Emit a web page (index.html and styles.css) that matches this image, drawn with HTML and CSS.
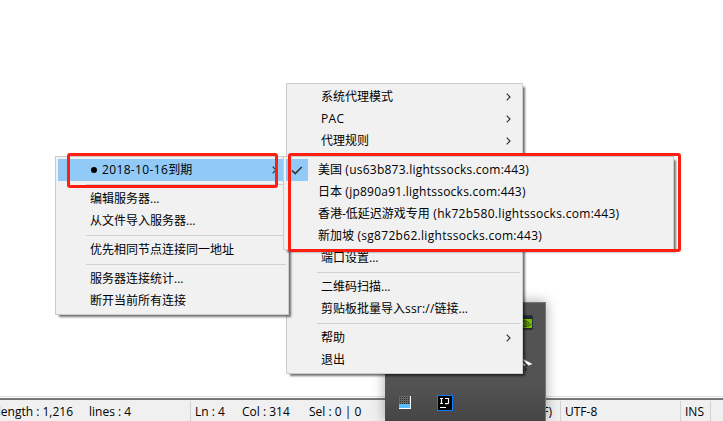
FILE: index.html
```html
<!DOCTYPE html>
<html lang="zh-CN">
<head>
<meta charset="utf-8">
<title>Menu</title>
<link rel="stylesheet" href="styles.css">
</head>
<body>
<div class="desktop">
  <main class="editor"></main>
  <footer class="status">
    <div class="cell doc"><span class="length">length : 1,216</span><span class="lines">lines : 4</span></div>
    <div class="cell pos"><span class="ln">Ln : 4</span><span class="col">Col : 314</span><span class="sel">Sel : 0 | 0</span></div>
    <div class="cell eol">Windows (CR LF)</div>
    <div class="cell enc">UTF-8</div>
    <div class="cell ins">INS</div>
    <div class="cell rest"></div>
  </footer>

  <section class="tray">
    <svg class="tray-icons" width="160" height="118" viewBox="0 0 160 118">
      <rect x="133.500" y="12.500" width="14" height="14" rx="1" fill="#22282c" stroke="#22313f"/>
      <rect x="134" y="16" width="13" height="9" fill="#76b900"/>
      <path d="M135 20q4-5 9 0q-4 5-9 0M137 20q3-3 5 0q-2 2-3 0M138 24q5 0 8-3" fill="none" stroke="#304c10"/>
      <path d="M134 54l4 2 9.500 5-4 1.500-3.500-2L136 59z" fill="#fff"/>
      <path d="M138 58.500l3 2.500-1 3-2-2z" fill="#e4e4e4"/>
      <path d="M137 57.500l5 4.500-2.500 2.500M141 65v3" fill="none" stroke="#222" stroke-width="1.200"/>
      <rect x="14" y="93" width="12" height="13" fill="#fff"/>
      <rect x="14" y="93" width="11" height="8" fill="#686868"/>
      <path d="M15 94.500h9M15 96.500h9M15 98.500h9M15 100.500h9" stroke="#2a2a2a" stroke-dasharray="1 1"/>
      <rect x="14" y="101" width="11" height="4" fill="#58bfff"/>
      <rect x="52.500" y="92.500" width="15" height="15" fill="#000" stroke="#087cff"/>
      <path d="M55 95.500h3M56.500 95.500v5M55 100.500h3M60 95.500h3.500v4.500q0 .7-1.500.7h-2M55 104.500h6" fill="none" stroke="#fff" stroke-width="1.200"/>
    </svg>
  </section>

  <nav class="menu main-menu">
    <div class="item"><span>系统代理模式</span><svg class="arrow" viewBox="0 0 5 8"><path d="M.7.7L4 4 .7 7.300"/></svg></div>
    <div class="item"><span class="pac">PAC</span><svg class="arrow" viewBox="0 0 5 8"><path d="M.7.7L4 4 .7 7.300"/></svg></div>
    <div class="item"><span>代理规则</span><svg class="arrow" viewBox="0 0 5 8"><path d="M.7.7L4 4 .7 7.300"/></svg></div>
    <div class="sep"></div>
    <div class="item"></div><div class="item"></div><div class="item"></div><div class="item"></div>
    <div class="item"><span>端口设置...</span></div>
    <div class="sep"></div>
    <div class="item"><span>二维码扫描...</span></div>
    <div class="item"><span>剪贴板批量导入<span class="ssr">ssr://</span>链接...</span></div>
    <div class="sep"></div>
    <div class="item"><span>帮助</span><svg class="arrow" viewBox="0 0 5 8"><path d="M.7.7L4 4 .7 7.300"/></svg></div>
    <div class="item"><span>退出</span></div>
  </nav>

  <nav class="menu server-menu">
    <div class="item active"><i class="dot"></i><span><span class="date">2018-10-16</span>到期</span><svg class="arrow" viewBox="0 0 5 8"><path d="M.7.7L4 4 .7 7.300"/></svg></div>
    <div class="sep"></div>
    <div class="item"><span>编辑服务器...</span></div>
    <div class="item"><span>从文件导入服务器...</span></div>
    <div class="sep"></div>
    <div class="item"><span>优先相同节点连接同一地址</span></div>
    <div class="sep"></div>
    <div class="item"><span>服务器连接统计...</span></div>
    <div class="item"><span>断开当前所有连接</span></div>
  </nav>

  <nav class="menu node-menu">
    <div class="item"><b class="check"><svg width="12" height="9" viewBox="0 0 12 9"><path d="M1 4.500L4.200 7.600 10.800 1"/></svg></b><span>美国<span class="host"> (us63b873.lightssocks.com:443)</span></span></div>
    <div class="item"><span>日本<span class="host"> (jp890a91.lightssocks.com:443)</span></span></div>
    <div class="item"><span>香港-低延迟游戏专用<span class="host wide"> (hk72b580.lightssocks.com:443)</span></span></div>
    <div class="item"><span>新加坡<span class="host wide"> (sg872b62.lightssocks.com:443)</span></span></div>
  </nav>

  <div class="mark mark-date"></div>
  <div class="mark mark-nodes"></div>
</div>
</body>
</html>
```
FILE: styles.css
```css
* { box-sizing: border-box; }
body { margin: 0; background: #fff; color: #000; font: 12px/22px "Open Sans", "Noto Sans CJK SC", sans-serif; overflow: hidden; }
.desktop { position: relative; width: 723px; height: 421px; display: flex; flex-direction: column; overflow: hidden; }
.editor { flex: 1; border-bottom: 1px solid #dedede; }
.status { height: 23px; margin-top: 1px; border-top: 2px solid #767676; background: #f0f0f0; display: flex; padding-top: 1px; white-space: nowrap; }
.cell { border-right: 1px solid #d2d2d2; overflow: hidden; display: flex; flex: none; }
.doc { width: 191px; }
.length { width: 89px; display: flex; justify-content: flex-end; padding-right: 16px; }
.pos { width: 250px; padding-left: 4px; }
.ln { width: 47px; }
.col { width: 67px; }
.eol { width: 120px; justify-content: flex-end; padding-right: 8px; }
.enc { width: 120px; padding-left: 4px; }
.ins { width: 30px; padding-left: 4px; }
.rest { flex: 1; border: 0; }

.tray { position: absolute; left: 385px; top: 302px; width: 161px; height: 119px; border-top: 1px solid #777; border-right: 1px solid #777; background: linear-gradient(#535353 70%, #454545); box-shadow: 0 0 12px rgba(0,0,0,.35); }
.tray-icons { display: block; }

.menu { position: absolute; padding: 2px; border: 1px solid #ccc; background: #f1f1f1; box-shadow: 3px 3px 2px -1px rgba(0,0,0,.55); }
.main-menu { left: 286px; top: 83px; width: 237px; height: 291px; }
.server-menu { left: 55px; top: 156px; width: 234px; height: 159px; }
.node-menu { left: 283px; top: 156px; width: 391px; height: 94px; }
.item { height: 22px; display: flex; align-items: center; padding-left: 32px; white-space: nowrap; }
.sep { height: 7px; padding: 3px 0; margin-left: 28px; background: #d0d0d0 content-box; }
.arrow { width: 5px; height: 8px; margin-left: auto; margin-right: 9px; fill: none; stroke: #333; stroke-width: 1.2; }
.active { background: #91c9f7; }
.dot { width: 6px; height: 6px; margin: 0 5px 0 1px; border-radius: 50%; background: #000; }
.date { letter-spacing: .35px; }
.pac { letter-spacing: .3px; }
.ssr { letter-spacing: .2px; }
.host { letter-spacing: .24px; }
.wide { letter-spacing: .3px; }
.node-menu .item:first-child { padding-left: 0; }
.check { width: 22px; height: 22px; margin-right: 10px; background: #91c9f7; display: flex; align-items: center; justify-content: center; }
.check svg { fill: none; stroke: #333; stroke-width: 1.6; }

.mark { position: absolute; border: 3px solid #ff1e12; border-radius: 3px; }
.mark-date { left: 67px; top: 153px; width: 211px; height: 35px; }
.mark-nodes { left: 288px; top: 153px; width: 393px; height: 99px; }
```
